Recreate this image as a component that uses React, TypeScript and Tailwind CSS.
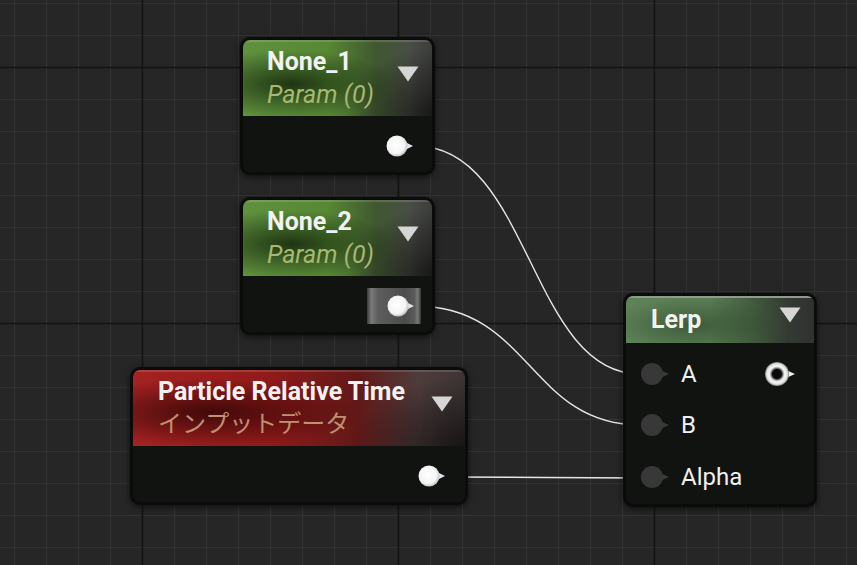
import React from "react";

const FONT = "font-['Roboto','Noto_Sans_CJK_JP',sans-serif]";

function Grid() {
  const minorX: number[] = [];
  const minorY: number[] = [];
  for (let x = 14; x < 857; x += 32) minorX.push(x);
  for (let y = 3; y < 565; y += 32) minorY.push(y);
  const majorX = [142, 398, 654];
  const majorY = [67, 323];
  return (
    <svg className="absolute inset-0" width={857} height={565}>
      <rect width={857} height={565} fill="#262626" />
      {minorX.map((x) => (
        <line key={"vx" + x} x1={x + 0.5} y1={0} x2={x + 0.5} y2={565} stroke="#333333" strokeWidth={1} />
      ))}
      {minorY.map((y) => (
        <line key={"hy" + y} x1={0} y1={y + 0.5} x2={857} y2={y + 0.5} stroke="#333333" strokeWidth={1} />
      ))}
      {majorX.map((x) => (
        <line key={"mx" + x} x1={x + 0.5} y1={0} x2={x + 0.5} y2={565} stroke="#141414" strokeWidth={1.6} />
      ))}
      {majorY.map((y) => (
        <line key={"my" + y} x1={0} y1={y + 0.5} x2={857} y2={y + 0.5} stroke="#141414" strokeWidth={1.6} />
      ))}
      {/* wires */}
      <g fill="none" stroke="#e6e6e6" strokeWidth={1.4}>
        <path d="M416,146 C530,146 530,374 640,374" />
        <path d="M416,306 C530,306 530,425 640,425" />
        <path d="M450,477 C545,477 545,478 640,478" />
      </g>
    </svg>
  );
}

function Caret() {
  return (
    <svg width={22} height={16} viewBox="0 0 22 16">
      <path d="M0.5,0.5 L21.5,0.5 L11,15.5 Z" fill="#d6d6d6" />
    </svg>
  );
}

function WhitePin() {
  return (
    <svg width={34} height={24} viewBox="0 0 34 24">
      <defs>
        <radialGradient id="wp" cx="45%" cy="45%" r="55%">
          <stop offset="0%" stopColor="#ffffff" />
          <stop offset="75%" stopColor="#f4f4f4" />
          <stop offset="100%" stopColor="#c4c4c4" />
        </radialGradient>
      </defs>
      <path d="M18,7.5 L27,12 L18,16.5 Z" fill="#dfe6ee" />
      <circle cx={11} cy={12} r={10.5} fill="url(#wp)" />
    </svg>
  );
}

function InPin() {
  return (
    <svg width={30} height={24} viewBox="0 0 30 24">
      <path d="M18,7.5 L28,12 L18,16.5 Z" fill="#3a3a3a" />
      <circle cx={11} cy={12} r={11} fill="#383838" />
    </svg>
  );
}

function RingPin() {
  return (
    <svg width={32} height={24} viewBox="0 0 32 24">
      <defs>
        <radialGradient id="rp" cx="50%" cy="50%" r="50%">
          <stop offset="38%" stopColor="#0a0a0a" />
          <stop offset="50%" stopColor="#8c8c8c" />
          <stop offset="64%" stopColor="#f6f6f6" />
          <stop offset="86%" stopColor="#e2e2e2" />
          <stop offset="100%" stopColor="#7a7a7a" />
        </radialGradient>
      </defs>
      <path d="M20,7.5 L30,12 L20,16.5 Z" fill="#ececec" />
      <circle cx={12} cy={12} r={12} fill="url(#rp)" />
    </svg>
  );
}

function ParamNode({
  left,
  top,
  title,
  highlight,
}: {
  left: string;
  top: string;
  title: string;
  highlight?: boolean;
}) {
  return (
    <div className={`absolute ${left} ${top} w-[195px] h-[138px] rounded-[10px] bg-[#0a0b0a] p-[3px] shadow-[0_2px_6px_rgba(0,0,0,0.6)]`}>
      <div className="h-full rounded-[7px] overflow-hidden flex flex-col bg-[#111311]">
        <div className="h-[76px] relative flex items-start justify-between pl-[24px] pr-[13px] pt-[7px] shadow-[inset_0_2px_0_rgba(255,255,255,0.14)] bg-[radial-gradient(ellipse_55%_45%_at_26%_58%,rgba(24,44,14,0.9),rgba(24,44,14,0)_100%),radial-gradient(ellipse_45%_90%_at_100%_100%,rgba(0,0,0,0.6),rgba(0,0,0,0)_100%),linear-gradient(to_right,#5f913e_0%,#578834_45%,#40582f_70%,#4a4e46_88%,#3c3c3c_100%)]">
          <div className="flex flex-col gap-[4px]">
            <span className="text-[25px] leading-[29px] font-bold text-[#f2f2f2]">{title}</span>
            <span className="text-[25px] leading-[29px] italic text-[#a7b872]">Param (0)</span>
          </div>
          <div className="mt-[19px]">
            <Caret />
          </div>
        </div>
        <div className="flex-1 flex items-start justify-end pt-[18px] pr-[12px]">
          {highlight ? (
            <div className="w-[54px] h-[36px] -mt-[6px] -mr-[1px] flex items-center pl-[20px] bg-[linear-gradient(to_right,#3a3a3a_0%,#7a7a7a_8%,#5e5e5e_20%,#4c4c4c_70%,#5a5a5a_88%,#7a7a7a_94%,#333_100%)]">
              <WhitePin />
            </div>
          ) : (
            <WhitePin />
          )}
        </div>
      </div>
    </div>
  );
}

function TimeNode() {
  return (
    <div className="absolute left-[130px] top-[367px] w-[338px] h-[138px] rounded-[10px] bg-[#0a0b0a] p-[3px] shadow-[0_2px_6px_rgba(0,0,0,0.6)]">
      <div className="h-full rounded-[7px] overflow-hidden flex flex-col bg-[#111311]">
        <div className="h-[76px] flex items-start justify-between pl-[25px] pr-[12px] pt-[7px] shadow-[inset_0_2px_0_rgba(255,255,255,0.14)] bg-[radial-gradient(ellipse_45%_45%_at_24%_56%,rgba(55,6,6,0.9),rgba(55,6,6,0)_100%),radial-gradient(ellipse_35%_90%_at_100%_100%,rgba(0,0,0,0.6),rgba(0,0,0,0)_100%),linear-gradient(to_right,#a42222_0%,#921a1a_40%,#621818_68%,#4e3c3c_86%,#3c3434_100%)]">
          <div className="flex flex-col gap-[4px]">
            <span className="text-[25px] leading-[29px] font-bold text-[#f2f2f2]">Particle Relative Time</span>
            <span className="text-[24px] leading-[29px] text-[#c09070]">インプットデータ</span>
          </div>
          <div className="mt-[19px]">
            <Caret />
          </div>
        </div>
        <div className="flex-1 flex items-start justify-end pt-[18px] pr-[13px]">
          <WhitePin />
        </div>
      </div>
    </div>
  );
}

function LerpNode() {
  const rows = ["A", "B", "Alpha"];
  return (
    <div className="absolute left-[623px] top-[293px] w-[194px] h-[214px] rounded-[10px] bg-[#0a0b0a] p-[3px] shadow-[0_2px_6px_rgba(0,0,0,0.6)]">
      <div className="h-full rounded-[7px] overflow-hidden flex flex-col bg-[#111311]">
        <div className="h-[47px] flex items-start justify-between pl-[25px] pr-[13px] pt-[7px] border-t-2 border-[#8f9c8d] bg-[radial-gradient(ellipse_45%_60%_at_35%_60%,rgba(40,62,36,0.55),rgba(40,62,36,0)_100%),linear-gradient(to_right,#5f8359_0%,#5a7d54_45%,#405a3c_68%,#343a33_86%,#313131_100%)]">
          <span className="text-[25px] leading-[29px] font-bold text-[#f2f2f2]">Lerp</span>
          <div className="mt-[2px]">
            <Caret />
          </div>
        </div>
        <div className="flex-1 flex flex-col pt-[5px]">
          {rows.map((r, i) => (
            <div key={r} className="h-[51.5px] flex items-center pl-[15px] pr-[17px]">
              <InPin />
              <span className="ml-[10px] text-[24px] text-[#f0f0f0]">{r}</span>
              {i === 0 && (
                <div className="ml-auto">
                  <RingPin />
                </div>
              )}
            </div>
          ))}
        </div>
      </div>
    </div>
  );
}

export default function App() {
  return (
    <div className={`relative w-[857px] h-[565px] overflow-hidden bg-[#262626] ${FONT}`}>
      <Grid />
      <ParamNode left="left-[240px]" top="top-[37px]" title="None_1" />
      <ParamNode left="left-[240px]" top="top-[197px]" title="None_2" highlight />
      <TimeNode />
      <LerpNode />
    </div>
  );
}
